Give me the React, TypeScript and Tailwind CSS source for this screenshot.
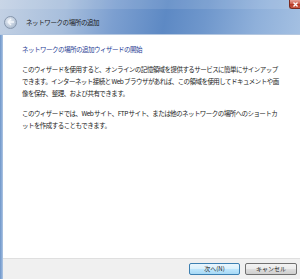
import React from "react";

const font = { fontFamily: '"Noto Sans CJK JP", "Noto Sans", sans-serif' };

export default function App() {
  return (
    <div
      className="w-[300px] h-[279px] flex flex-col overflow-hidden bg-white"
      style={font}
    >
      {/* Title bar */}
      <div className="relative h-[35px] shrink-0 flex items-center bg-[linear-gradient(100deg,#c3d1e4_0%,#a7bedc_22%,#7c9fd0_38%,#5d89c4_55%,#6f97cc_68%,#8fb0da_85%,#a4c0e2_100%)] border-b border-[#b5c8e0]">
        <div className="absolute inset-x-0 top-0 h-[9px] bg-white/10" />
        <div className="ml-[4px] mt-[10px] w-[13px] h-[13px] rounded-full bg-[radial-gradient(circle_at_40%_35%,#e8eef6_0%,#bcc9da_60%,#94a6bf_100%)] border border-[#8797ad] flex items-center justify-center">
          <svg width="8" height="8" viewBox="0 0 8 8">
            <path d="M1 4 L4 1 M1 4 L4 7 M1 4 H7" stroke="#f4f7fb" strokeWidth="1.4" fill="none" />
          </svg>
        </div>
        <div className="ml-[9px] mt-[10px] text-[6.5px] leading-[12px] tracking-[-0.4px] text-[#1a1a1a]">
          ネットワークの場所の追加
        </div>
        <div className="absolute right-0 top-0 w-[11px] h-[9px] rounded-bl-[3px] bg-[linear-gradient(180deg,#e8a49a_0%,#d0614f_45%,#b83a26_55%,#c95a45_100%)] border-l border-b border-[#7a2a20] flex items-center justify-center">
          <svg width="5" height="5" viewBox="0 0 5 5">
            <path d="M0.5 0.5 L4.5 4.5 M4.5 0.5 L0.5 4.5" stroke="#ffffff" strokeWidth="1.3" />
          </svg>
        </div>
      </div>

      <div className="flex flex-1">
        <div className="w-[3px] shrink-0 bg-[linear-gradient(90deg,#6f95c8_0%,#8fb0da_60%,#b4c8e2_100%)]" />
        <div className="flex-1 flex flex-col">
          <div className="flex-1 bg-white pl-[19px] pt-[8px]">
            <div className="text-[6.5px] leading-[12px] tracking-[-0.5px] text-[#1f3d94] whitespace-nowrap">
              ネットワークの場所の追加ウィザードの開始
            </div>
            <div className="mt-[8px] text-[6.5px] leading-[12px] tracking-[-0.55px] text-[#222] whitespace-nowrap">
              <div>このウィザードを使用すると、オンラインの記憶領域を提供するサービスに簡単にサインアップ</div>
              <div>できます。インターネット接続と Web ブラウザがあれば、この領域を使用してドキュメントや画</div>
              <div>像を保存、整理、および共有できます。</div>
            </div>
            <div className="mt-[8px] text-[6.5px] leading-[12px] tracking-[-0.55px] text-[#222] whitespace-nowrap">
              <div>このウィザードでは、Web サイト、FTP サイト、または他のネットワークの場所へのショートカ</div>
              <div>ットを作成することもできます。</div>
            </div>
          </div>
          <div className="h-[21px] shrink-0 bg-[#f0f0f0] border-t border-[#dfdfdf] flex items-center justify-end gap-[5px] pr-[3px]">
            <button className="w-[51px] h-[12px] rounded-[2px] border border-[#3c7fb1] bg-[linear-gradient(180deg,#eaf6fd_0%,#d9f0fc_50%,#bee6fd_51%,#a7d9f5_100%)] text-[6px] leading-[10px] text-[#222] flex items-center justify-center">
              次へ(N)
            </button>
            <button className="w-[52px] h-[12px] rounded-[2px] border border-[#707070] bg-[linear-gradient(180deg,#f2f2f2_0%,#ebebeb_50%,#dddddd_51%,#cfcfcf_100%)] text-[6px] leading-[10px] text-[#222] flex items-center justify-center">
              キャンセル
            </button>
          </div>
        </div>
      </div>
    </div>
  );
}
